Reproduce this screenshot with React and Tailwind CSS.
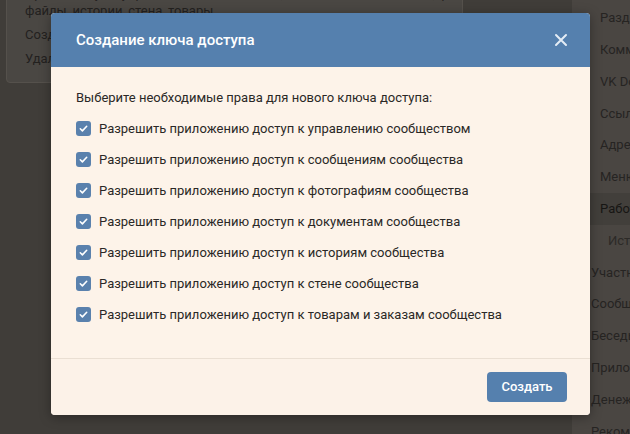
import React from 'react';

// permissions listed in the dialog
const RIGHTS = [
  'Разрешить приложению доступ к управлению сообществом',
  'Разрешить приложению доступ к сообщениям сообщества',
  'Разрешить приложению доступ к фотографиям сообщества',
  'Разрешить приложению доступ к документам сообщества',
  'Разрешить приложению доступ к историям сообщества',
  'Разрешить приложению доступ к стене сообщества',
  'Разрешить приложению доступ к товарам и заказам сообщества',
];

const MENU = [
  { label: 'Разделы', sub: true },
  { label: 'Комментарии', sub: true },
  { label: 'VK Donut', sub: true },
  { label: 'Ссылки', sub: true },
  { label: 'Адреса', sub: true },
  { label: 'Меню', sub: true },
  { label: 'Работа с API', sub: true, active: true },
  { label: 'История', sub: true, deep: true },
  { label: 'Участники' },
  { label: 'Сообщения' },
  { label: 'Беседы' },
  { label: 'Приложения' },
  { label: 'Денежные переводы' },
  { label: 'Рекомендации' },
];

const Check = () => (
  <span className="w-[15px] h-[15px] shrink-0 rounded-[3px] bg-[#5a81ad] flex items-center justify-center">
    <svg width="11" height="11" viewBox="0 0 12 12" fill="none">
      <path d="M2.5 6.3l2.3 2.3 4.7-5" stroke="#fff" strokeWidth="1.7" strokeLinecap="round" strokeLinejoin="round" />
    </svg>
  </span>
);

const Background = () => (
  <div className="flex h-full">
    <div className="w-[566px] shrink-0 pl-[6px]">
      <div className="-mt-[22px] w-[457px] h-[105px] overflow-hidden whitespace-nowrap rounded-[4px] border border-[#55514c] bg-[#4a4743] px-[18px] pt-[6px] text-[13px] leading-[17px] text-[#23211f]">
        <p>Права доступа: управление сообществом, сообщения сообщества, фотографии,</p>
        <p>файлы, истории, стена, товары</p>
        <p className="mt-[7px]">Созданы 12 марта 2021</p>
        <p className="mt-[7px]">Удалить ключ</p>
      </div>
    </div>
    <div className="flex-1 ml-[6px] bg-[#4a4642] pt-[2px] text-[13px] text-[#262422]">
      {MENU.map((m) => (
        <div
          key={m.label}
          className={`h-[31.8px] flex items-center whitespace-nowrap ${m.sub ? 'pl-[28px]' : 'pl-[19px]'} ${m.active ? 'bg-[#423f3b] text-[#171614]' : ''}`}
        >
          <span className={m.deep ? 'pl-[8px] text-[#2c2a27]' : ''}>{m.label}</span>
        </div>
      ))}
    </div>
  </div>
);

export default function App() {
  return (
    <div
      className="relative w-[630px] h-[434px] overflow-hidden bg-[#403d39]"
      style={{ fontFamily: 'Roboto, "Liberation Sans", sans-serif' }}
    >
      <Background />

      <div className="absolute left-[51px] top-[13px] w-[539px] h-[402px] rounded-[4px] overflow-hidden bg-[#fdf3e9] shadow-[0_2px_12px_rgba(0,0,0,0.35)] flex flex-col">
        <div className="h-[54px] shrink-0 bg-[#5580ae] flex items-center justify-between pl-[25px] pr-[22px]">
          <span className="text-[15px] font-medium text-white">Создание ключа доступа</span>
          <svg width="14" height="14" viewBox="0 0 14 14">
            <path d="M2 2l10 10M12 2L2 12" stroke="#e4ecf5" strokeWidth="2" strokeLinecap="round" />
          </svg>
        </div>

        <div className="flex-1 px-[25px] pt-[22px] text-[13px] text-[#2a2826]">
          <p className="leading-[17px]">Выберите необходимые права для нового ключа доступа:</p>
          <div className="mt-[7px] flex flex-col">
            {RIGHTS.map((r) => (
              <label key={r} className="h-[31px] flex items-center gap-[8px]">
                <Check />
                <span>{r}</span>
              </label>
            ))}
          </div>
        </div>

        <div className="h-[57px] shrink-0 border-t border-[#eadfd3] bg-[#fcf2e8] flex items-center justify-end pr-[23px]">
          <button className="w-[80px] h-[30px] rounded-[4px] bg-[#5580ae] text-white text-[13px] font-medium">
            Создать
          </button>
        </div>
      </div>
    </div>
  );
}
